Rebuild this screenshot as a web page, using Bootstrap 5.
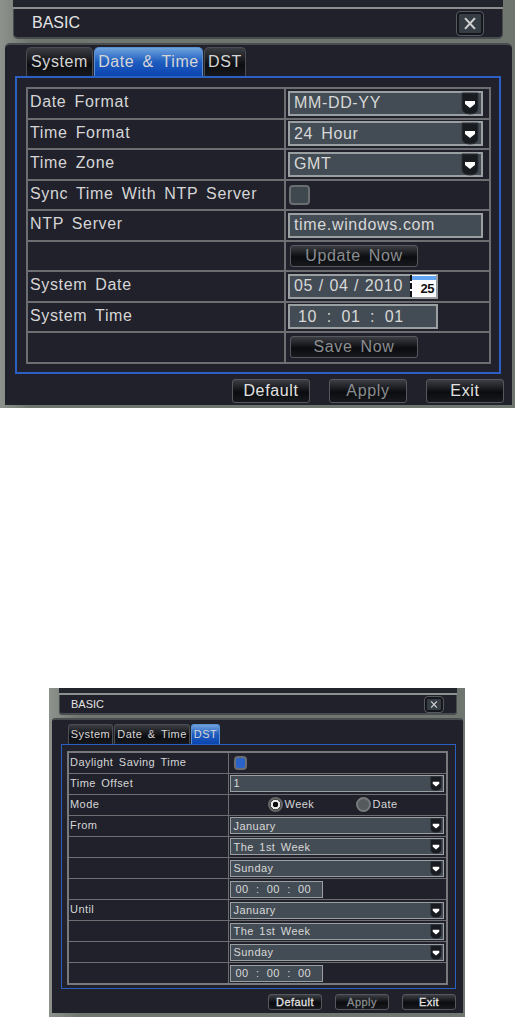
<!DOCTYPE html>
<html lang="en">
<head>
  <meta charset="UTF-8" />
  <meta name="viewport" content="width=device-width, initial-scale=1.0"/>
  <title>BASIC</title>
  <link href="https://cdn.jsdelivr.net/npm/bootstrap@5.3.0/dist/css/bootstrap.min.css" rel="stylesheet"/>
  <style>
    body { background: #fff; margin: 0; }

    /* Tamanhos das duas capturas */
    .dvr {
      font-family: "Liberation Sans", Arial, sans-serif;
      color: #d6d6d6;
      background: linear-gradient(90deg, #8d928c 0, #6f756f 30px, #6f756f 100%);
      overflow: hidden;
    }
    .dvr-lg {
      width: 515px; height: 408px;
      font-size: 16px; letter-spacing: .65px; word-spacing: 3px;
      --row: 30.5px; --ctl: 25px; --tabh: 29px; --radius: 5px;
    }
    .dvr-sm {
      width: 416px; height: 329px; margin: 280px 0 0 49px;
      font-size: 11px; letter-spacing: .45px; word-spacing: 2px;
      --row: 21.1px; --ctl: 17px; --tabh: 20px; --radius: 3px;
    }

    .dvr-strip { background: #23252d; border-bottom: 2px solid #8c8f8e; }
    .dvr-lg .dvr-strip { height: 9px; margin-left: 13px; width: 490px; }
    .dvr-sm .dvr-strip { height: 7px; margin-left: 10px; width: 398px; }
    .dvr-title {
      background: #20212b;
      border-bottom: 2px solid #4a4d50;
      border-left: 1px solid #4a4d50;
      border-right: 1px solid #4a4d50;
      border-radius: 0 0 var(--radius) var(--radius);
      letter-spacing: 0; word-spacing: 0;
    }
    .dvr-lg .dvr-title { height: 30px; width: 490px; margin-left: 13px; padding: 0 19px 0 18px; }
    .dvr-sm .dvr-title { height: 20px; width: 398px; margin-left: 10px; padding: 0 13px 0 11px; }
    .dvr-name { color: #e4e4e4; }
    .dvr-close {
      background: #363d45;
      border: 2px solid #15171c;
      outline: 1px solid #555a5e;
      border-radius: 3px;
      padding: 0;
    }
    .dvr-lg .dvr-close { width: 26px; height: 23px; }
    .dvr-sm .dvr-close { width: 18px; height: 15px; }
    .dvr-close svg { display: block; width: 100%; height: 100%; }

    .dvr-panel {
      background: #20212b;
      border-top: 2px solid #4a4d50;
      border-radius: var(--radius) var(--radius) 0 0;
    }
    .dvr-lg .dvr-panel { width: 507px; height: 362px; margin: 4px 0 0 5px; padding: 2px 11px 0 10px; }
    .dvr-sm .dvr-panel { width: 411px; height: 295px; margin: 3px 0 0 3px; padding: 4px 7px 0 9px; }

    .dvr-tabs { height: var(--tabh); gap: 1px; }
    .dvr-lg .dvr-tabs { padding-left: 11px; }
    .dvr-sm .dvr-tabs { padding-left: 7px; }
    .dvr-tab {
      height: 100%;
      display: flex; align-items: center; justify-content: center;
      background: linear-gradient(#3a3d42, #0c0d10 60%, #16181d);
      border: 1px solid #4a4d52; border-bottom: 0;
      border-radius: var(--radius) var(--radius) 0 0;
      color: #d6d6d6;
      white-space: nowrap;
      text-decoration: none;
      word-spacing: 2px;
    }
    .dvr-tab.is-on { background: linear-gradient(#6ea3dd, #1e5cc0 50%, #0b45b0); border-color: #5b8fd0; }
    .dvr-lg .dvr-tab { width: 67px; letter-spacing: .6px; word-spacing: 3px; }
    .dvr-lg .dvr-tab.is-wide { width: 109px; }
    .dvr-lg .dvr-tab.is-short { width: 42px; }
    .dvr-sm .dvr-tab { width: 45px; }
    .dvr-sm .dvr-tab.is-wide { width: 76px; }
    .dvr-sm .dvr-tab.is-short { width: 29px; }

    .dvr-box { border: 2px solid #2b5fc4; }
    .dvr-lg .dvr-box { width: 486px; height: 298px; padding: 9px 8px 0 9px; }
    .dvr-sm .dvr-box { width: 395px; height: 245px; padding: 6px 7px 0 5px; border-width: 1px; }

    .dvr-grid {
      width: 100%;
      table-layout: fixed;
      border-collapse: collapse;
      border: 2px solid #77797c;
    }
    .dvr-grid td {
      height: var(--row);
      padding: 0 0 0 2px;
      border: 2px solid #6c6e71;
      vertical-align: middle;
      white-space: nowrap;
    }
    .dvr-lg .dvr-grid td:first-child { width: 258px; padding-bottom: 2px; }
    .dvr-sm .dvr-grid td:first-child { width: 160px; padding-bottom: 1px; }
    .dvr-sm .dvr-grid td { border-width: 1px; padding-left: 1px; }

    .dvr-field {
      height: var(--ctl);
      background: #434c54;
      border: 2px solid #9a9fa1;
      padding-left: 4px;
      color: #d8d8d8;
    }
    .dvr-lg .dvr-field { width: 195px; }
    .dvr-sm .dvr-field { width: 214px; border-width: 1px; padding-left: 3px; }
    .dvr-lg .dvr-field.is-short { width: 150px; }
    .dvr-sm .dvr-field.is-short { width: 93px; }
    .dvr-caret { flex: none; display: block; }
    .dvr-lg .dvr-caret { width: 18px; height: 23px; margin-right: 2px; }
    .dvr-sm .dvr-caret { width: 12px; height: 15px; margin-right: 1px; }
    .dvr-clock { word-spacing: 4.5px; }
    .dvr-lg .dvr-clock { padding-left: 8px; }
    .dvr-sm .dvr-clock { padding-left: 5px; word-spacing: 3.8px; }
    .dvr-date { word-spacing: .5px; white-space: nowrap; }

    .dvr-cal {
      flex: none;
      background: linear-gradient(#fff 0 1px, #63a5f5 1px 5px, #fff 5px);
      color: #111;
      font-weight: 700; letter-spacing: -.5px;
      text-align: right;
      border-left: 2px dashed #111;
    }
    .dvr-lg .dvr-cal { width: 26px; height: 22px; font-size: 13px; line-height: 27px; padding-right: 2px; }

    .dvr-check {
      display: block;
      background: #40484f;
      border: 2px solid #6a6e70;
      border-radius: 4px;
    }
    .dvr-lg .dvr-check { width: 21px; height: 20px; margin-left: 1px; }
    .dvr-sm .dvr-check { width: 13px; height: 14px; margin-left: 4px; background: #2a62c8; }

    .dvr-radio {
      width: 15px; height: 15px; border-radius: 50%;
      flex: none;
      background: #555a5c;
      border: 2px solid #777b7c;
    }
    .dvr-radio.is-on { background: radial-gradient(circle, #0c0c0c 0 2.6px, #e8e8e8 3px 4.5px, #444 5px); border-color: #666; }
    .dvr-modes { padding-left: 38px; gap: 2px; }
    .dvr-modes > span:nth-child(2) { width: 69px; }

    .dvr-btn {
      background: linear-gradient(#3b3e44, #0b0c0f 55%, #17191e);
      border: 1px solid #55585c;
      border-radius: 3px;
      color: #e2e2e2;
      display: flex; align-items: center; justify-content: center;
      padding: 0;
      letter-spacing: inherit;
      word-spacing: inherit;
    }
    .dvr-btn.is-off { color: #8a8d90; }
    .dvr-lg .dvr-btn { width: 78px; height: 24px; }
    .dvr-sm .dvr-btn { width: 54px; height: 16px; -webkit-text-stroke: .3px; }
    .dvr-lg .dvr-btn.is-long { width: 128px; height: 22px; margin-left: 2px; }

    .dvr-foot { justify-content: flex-end; }
    .dvr-lg .dvr-foot { padding-top: 5px; gap: 19px; margin-right: -3px; }
    .dvr-sm .dvr-foot { padding-top: 5px; gap: 13px; }
  </style>
</head>
<body>

<svg width="0" height="0" class="position-absolute">
  <defs>
    <symbol id="ico-caret" viewBox="0 0 18 23">
      <path d="M1 1h16v15q0 6-8 6t-8-6z" fill="#181b20" stroke="#2c3036"/>
      <path d="M4 9h10v3l-5 4-5-4z" fill="#fff"/>
    </symbol>
    <symbol id="ico-close" viewBox="0 0 26 23">
      <path d="M7 5l12 13M19 5L7 18" stroke="#cfcfcf" stroke-width="2.6"/>
    </symbol>
  </defs>
</svg>

<!-- Date & Time -->
<div class="dvr dvr-lg">
  <div class="dvr-strip"></div>
  <div class="dvr-title d-flex justify-content-between align-items-center">
    <span class="dvr-name">BASIC</span>
    <button class="dvr-close" aria-label="Close"><svg><use href="#ico-close"/></svg></button>
  </div>
  <div class="dvr-panel">
    <div class="dvr-tabs d-flex">
      <a class="dvr-tab" href="#">System</a>
      <a class="dvr-tab is-wide is-on" href="#">Date &amp; Time</a>
      <a class="dvr-tab is-short" href="#">DST</a>
    </div>
    <div class="dvr-box">
      <table class="dvr-grid">
        <tr><td>Date Format</td><td><div class="dvr-field d-flex align-items-center justify-content-between"><span>MM-DD-YY</span><svg class="dvr-caret"><use href="#ico-caret"/></svg></div></td></tr>
        <tr><td>Time Format</td><td><div class="dvr-field d-flex align-items-center justify-content-between"><span>24 Hour</span><svg class="dvr-caret"><use href="#ico-caret"/></svg></div></td></tr>
        <tr><td>Time Zone</td><td><div class="dvr-field d-flex align-items-center justify-content-between"><span>GMT</span><svg class="dvr-caret"><use href="#ico-caret"/></svg></div></td></tr>
        <tr><td>Sync Time With NTP Server</td><td><span class="dvr-check"></span></td></tr>
        <tr><td>NTP Server</td><td><div class="dvr-field d-flex align-items-center">time.windows.com</div></td></tr>
        <tr><td></td><td><button class="dvr-btn is-long is-off">Update Now</button></td></tr>
        <tr><td>System Date</td><td><div class="dvr-field is-short d-flex align-items-center justify-content-between"><span class="dvr-date">05 / 04 / 2010</span><span class="dvr-cal">25</span></div></td></tr>
        <tr><td>System Time</td><td><div class="dvr-field is-short dvr-clock d-flex align-items-center">10 : 01 : 01</div></td></tr>
        <tr><td></td><td><button class="dvr-btn is-long is-off">Save Now</button></td></tr>
      </table>
    </div>
    <div class="dvr-foot d-flex">
      <button class="dvr-btn">Default</button>
      <button class="dvr-btn is-off">Apply</button>
      <button class="dvr-btn">Exit</button>
    </div>
  </div>
</div>

<!-- DST -->
<div class="dvr dvr-sm">
  <div class="dvr-strip"></div>
  <div class="dvr-title d-flex justify-content-between align-items-center">
    <span class="dvr-name">BASIC</span>
    <button class="dvr-close" aria-label="Close"><svg><use href="#ico-close"/></svg></button>
  </div>
  <div class="dvr-panel">
    <div class="dvr-tabs d-flex">
      <a class="dvr-tab" href="#">System</a>
      <a class="dvr-tab is-wide" href="#">Date &amp; Time</a>
      <a class="dvr-tab is-short is-on" href="#">DST</a>
    </div>
    <div class="dvr-box">
      <table class="dvr-grid">
        <tr><td>Daylight Saving Time</td><td><span class="dvr-check"></span></td></tr>
        <tr><td>Time Offset</td><td><div class="dvr-field d-flex align-items-center justify-content-between"><span>1</span><svg class="dvr-caret"><use href="#ico-caret"/></svg></div></td></tr>
        <tr><td>Mode</td><td><div class="dvr-modes d-flex align-items-center"><span class="dvr-radio is-on"></span><span>Week</span><span class="dvr-radio"></span><span>Date</span></div></td></tr>
        <tr><td>From</td><td><div class="dvr-field d-flex align-items-center justify-content-between"><span>January</span><svg class="dvr-caret"><use href="#ico-caret"/></svg></div></td></tr>
        <tr><td></td><td><div class="dvr-field d-flex align-items-center justify-content-between"><span>The 1st Week</span><svg class="dvr-caret"><use href="#ico-caret"/></svg></div></td></tr>
        <tr><td></td><td><div class="dvr-field d-flex align-items-center justify-content-between"><span>Sunday</span><svg class="dvr-caret"><use href="#ico-caret"/></svg></div></td></tr>
        <tr><td></td><td><div class="dvr-field is-short dvr-clock d-flex align-items-center">00 : 00 : 00</div></td></tr>
        <tr><td>Until</td><td><div class="dvr-field d-flex align-items-center justify-content-between"><span>January</span><svg class="dvr-caret"><use href="#ico-caret"/></svg></div></td></tr>
        <tr><td></td><td><div class="dvr-field d-flex align-items-center justify-content-between"><span>The 1st Week</span><svg class="dvr-caret"><use href="#ico-caret"/></svg></div></td></tr>
        <tr><td></td><td><div class="dvr-field d-flex align-items-center justify-content-between"><span>Sunday</span><svg class="dvr-caret"><use href="#ico-caret"/></svg></div></td></tr>
        <tr><td></td><td><div class="dvr-field is-short dvr-clock d-flex align-items-center">00 : 00 : 00</div></td></tr>
      </table>
    </div>
    <div class="dvr-foot d-flex">
      <button class="dvr-btn">Default</button>
      <button class="dvr-btn is-off">Apply</button>
      <button class="dvr-btn">Exit</button>
    </div>
  </div>
</div>

<script src="https://cdn.jsdelivr.net/npm/bootstrap@5.3.0/dist/js/bootstrap.bundle.min.js"></script>
</body>
</html>
